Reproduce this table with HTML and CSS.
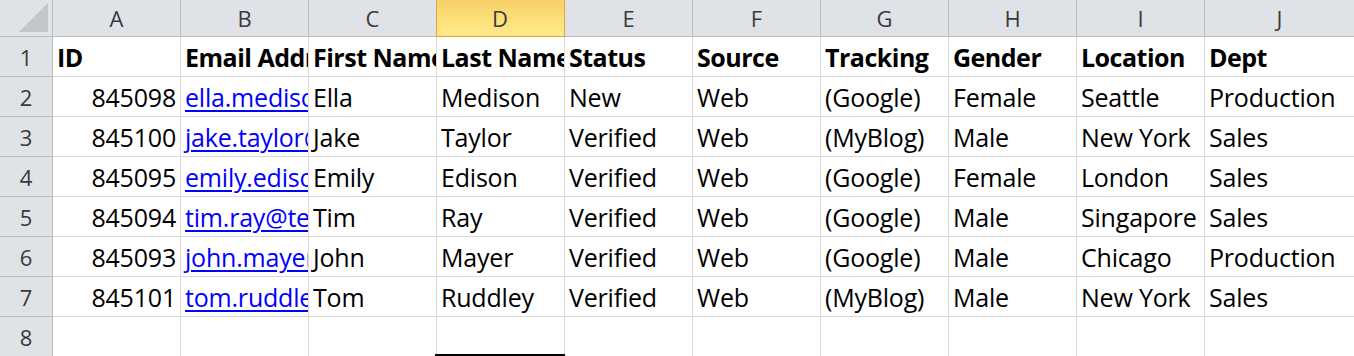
FILE: index.html
```html
<!DOCTYPE html>
<html lang="en">
<head>
<meta charset="utf-8">
<title>Leads</title>
<link rel="stylesheet" href="styles.css">
</head>
<body>
<div class="sheet">
  <div class="hd corner"><span class="tri"></span></div>
  <div class="hd col">A</div>
  <div class="hd col">B</div>
  <div class="hd col">C</div>
  <div class="hd col active">D</div>
  <div class="hd col">E</div>
  <div class="hd col">F</div>
  <div class="hd col">G</div>
  <div class="hd col">H</div>
  <div class="hd col">I</div>
  <div class="hd col">J</div>

  <div class="hd row">1</div>
  <div class="c b">ID</div>
  <div class="c b">Email Address</div>
  <div class="c b">First Name</div>
  <div class="c b">Last Name</div>
  <div class="c b">Status</div>
  <div class="c b">Source</div>
  <div class="c b">Tracking</div>
  <div class="c b">Gender</div>
  <div class="c b">Location</div>
  <div class="c b">Dept</div>

  <div class="hd row">2</div>
  <div class="c n">845098</div>
  <div class="c"><a class="link">ella.medison@example.com</a></div>
  <div class="c">Ella</div>
  <div class="c">Medison</div>
  <div class="c">New</div>
  <div class="c">Web</div>
  <div class="c">(Google)</div>
  <div class="c">Female</div>
  <div class="c">Seattle</div>
  <div class="c">Production</div>

  <div class="hd row">3</div>
  <div class="c n">845100</div>
  <div class="c"><a class="link">jake.taylor@example.com</a></div>
  <div class="c">Jake</div>
  <div class="c">Taylor</div>
  <div class="c">Verified</div>
  <div class="c">Web</div>
  <div class="c">(MyBlog)</div>
  <div class="c">Male</div>
  <div class="c">New York</div>
  <div class="c">Sales</div>

  <div class="hd row">4</div>
  <div class="c n">845095</div>
  <div class="c"><a class="link">emily.edison@example.com</a></div>
  <div class="c">Emily</div>
  <div class="c">Edison</div>
  <div class="c">Verified</div>
  <div class="c">Web</div>
  <div class="c">(Google)</div>
  <div class="c">Female</div>
  <div class="c">London</div>
  <div class="c">Sales</div>

  <div class="hd row">5</div>
  <div class="c n">845094</div>
  <div class="c"><a class="link">tim.ray@test.com</a></div>
  <div class="c">Tim</div>
  <div class="c">Ray</div>
  <div class="c">Verified</div>
  <div class="c">Web</div>
  <div class="c">(Google)</div>
  <div class="c">Male</div>
  <div class="c">Singapore</div>
  <div class="c">Sales</div>

  <div class="hd row">6</div>
  <div class="c n">845093</div>
  <div class="c"><a class="link">john.mayer@example.com</a></div>
  <div class="c">John</div>
  <div class="c">Mayer</div>
  <div class="c">Verified</div>
  <div class="c">Web</div>
  <div class="c">(Google)</div>
  <div class="c">Male</div>
  <div class="c">Chicago</div>
  <div class="c">Production</div>

  <div class="hd row">7</div>
  <div class="c n">845101</div>
  <div class="c"><a class="link">tom.ruddley@example.com</a></div>
  <div class="c">Tom</div>
  <div class="c">Ruddley</div>
  <div class="c">Verified</div>
  <div class="c">Web</div>
  <div class="c">(MyBlog)</div>
  <div class="c">Male</div>
  <div class="c">New York</div>
  <div class="c">Sales</div>

  <div class="hd row">8</div>
  <div class="c"></div>
  <div class="c"></div>
  <div class="c"></div>
  <div class="c sel-top"></div>
  <div class="c"></div>
  <div class="c"></div>
  <div class="c"></div>
  <div class="c"></div>
  <div class="c"></div>
  <div class="c"></div>
</div>
</body>
</html>
```

FILE: styles.css
```css
html, body {
  margin: 0;
  padding: 0;
  background: #ffffff;
  overflow: hidden;
}

.sheet {
  display: grid;
  grid-template-columns: 53px repeat(9, 128px) 150px;
  grid-template-rows: 37px repeat(8, 40px);
  width: 1354px;
  height: 356px;
  overflow: hidden;
  font-family: "Open Sans", "Noto Sans", sans-serif;
}

/* row and column headers */
.hd {
  box-sizing: border-box;
  background: #dfe3e8;
  color: #3a3a3a;
  font-size: 22px;
  line-height: 37px;
  text-align: center;
  border-right: 1px solid #b9bdc2;
  border-bottom: 1px solid #b9bdc2;
}

.hd.row {
  line-height: 40px;
}

.hd.active {
  background: linear-gradient(to bottom, #f9cf68 0%, #fde27c 60%, #fee98a 100%);
  border-right: 1px solid #e2a33d;
  border-bottom: 1px solid #e2a33d;
  box-shadow: inset 1px 0 0 #e2a33d;
  margin-left: -1px;
}

.corner {
  position: relative;
}

.corner .tri {
  position: absolute;
  right: 4px;
  bottom: 4px;
  width: 0;
  height: 0;
  border-left: 29px solid transparent;
  border-bottom: 29px solid #c2c6ca;
}

/* worksheet cells */
.c {
  box-sizing: border-box;
  border-right: 1px solid #d9d9d9;
  border-bottom: 1px solid #d9d9d9;
  font-size: 25px;
  line-height: 40px;
  letter-spacing: -0.2px;
  color: #000;
  padding: 0 4px 0 4px;
  white-space: nowrap;
  overflow: hidden;
}

.c.b {
  font-weight: 700;
  letter-spacing: -0.5px;
}

.c.n {
  text-align: right;
}

.link {
  color: #0000ff;
  text-decoration: underline;
  text-decoration-thickness: 2px;
  text-underline-offset: 3px;
}

/* top edge of the active-cell outline below row 8 */
.sel-top {
  position: relative;
  overflow: visible;
}

.sel-top::after {
  content: "";
  position: absolute;
  left: -2px;
  right: -1px;
  bottom: 0;
  height: 2px;
  background: #000;
}
```
